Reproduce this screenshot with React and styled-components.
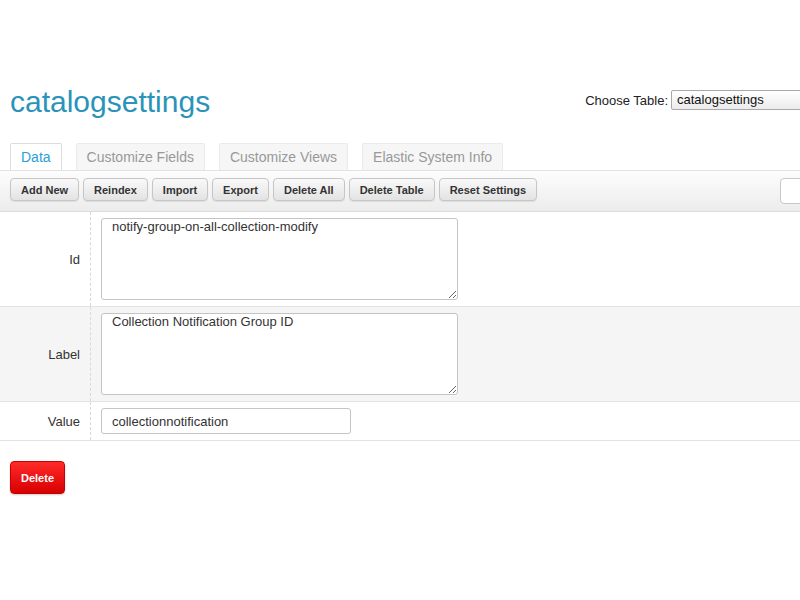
import React from 'react';
import styled, { createGlobalStyle } from 'styled-components';

const GlobalStyle = createGlobalStyle`
  html, body {
    margin: 0;
    padding: 0;
    overflow: hidden;
    background: #fff;
  }
  body {
    font-family: "Liberation Sans", Arial, sans-serif;
    color: #333;
  }
`

const Page = styled.div`
  width: 900px;
  padding-top: 85px;
`

const Header = styled.div`
  display: flex;
  align-items: flex-start;
  padding: 0 10px;
  height: 58px;
`

const Title = styled.h1`
  margin: 0;
  font-size: 30px;
  font-weight: normal;
  line-height: 34px;
  color: #2a93b9;
`

const Chooser = styled.div`
  margin-left: auto;
  display: flex;
  align-items: center;
  gap: 3px;
  padding-top: 5px;
  font-size: 13px;
  color: #222;
`

const Select = styled.div`
  width: 207px;
  height: 18px;
  line-height: 18px;
  padding: 0 5px;
  border: 1px solid #a9a9a9;
  border-radius: 2px;
  background: linear-gradient(#ffffff, #ececec);
  font-size: 13px;
  color: #111;
`

const Tabs = styled.div`
  display: flex;
  gap: 14px;
  padding: 0 10px;
`

const Tab = styled.div`
  height: 26px;
  line-height: 27px;
  padding: 0 10px;
  font-size: 14px;
  border: 1px solid ${p => (p.$active ? '#dcdcdc' : '#eaeaea')};
  border-bottom: none;
  background: ${p => (p.$active ? '#fff' : '#f6f6f6')};
  color: ${p => (p.$active ? '#2a9fd6' : '#999')};
  border-radius: 2px 2px 0 0;
`

const Toolbar = styled.div`
  display: flex;
  align-items: flex-start;
  gap: 4px;
  height: 33px;
  padding: 7px 10px 0;
  background: linear-gradient(#fdfdfd, #ececec);
  border-top: 1px solid #e2e2e2;
  border-bottom: 1px solid #dcdcdc;
`

const ToolButton = styled.button`
  height: 23px;
  padding: 0 10px;
  font-family: inherit;
  font-size: 11px;
  font-weight: bold;
  color: #333;
  border: 1px solid #c6c6c6;
  border-radius: 4px;
  background: linear-gradient(#f9f9f9, #e3e3e3);
  box-shadow: 0 1px 1px rgba(0, 0, 0, 0.08);
`

const Search = styled.input`
  margin-left: auto;
  width: 104px;
  height: 22px;
  border: 1px solid #c8c8c8;
  border-radius: 4px;
  background: #fff;
`

const Row = styled.div`
  display: flex;
  align-items: stretch;
  background: ${p => (p.$alt ? '#f5f5f5' : '#fff')};
  border-bottom: 1px solid #e3e3e3;
`

const Label = styled.div`
  width: 80px;
  padding-right: 10px;
  display: flex;
  align-items: center;
  justify-content: flex-end;
  font-size: 13px;
  color: #333;
  border-right: 1px dashed #d8d8d8;
`

const Field = styled.div`
  padding: 6px 10px 6px 10px;
  display: flex;
  align-items: center;
`

const Area = styled.textarea`
  box-sizing: border-box;
  width: 357px;
  height: 82px;
  padding: 0 10px;
  border: 1px solid #c4c4c4;
  border-radius: 3px;
  background: #fff;
  font-family: "Liberation Sans", Arial, sans-serif;
  font-size: 13px;
  color: #333;
  resize: vertical;
`

const Input = styled.input`
  box-sizing: border-box;
  width: 250px;
  height: 26px;
  padding: 0 10px;
  border: 1px solid #c4c4c4;
  border-radius: 3px;
  background: #fff;
  font-family: "Liberation Sans", Arial, sans-serif;
  font-size: 13px;
  color: #333;
`

const Footer = styled.div`
  padding: 20px 10px;
`

const DeleteButton = styled.button`
  height: 33px;
  padding: 0 10px;
  font-family: inherit;
  font-size: 11px;
  font-weight: bold;
  color: #fff;
  border: 1px solid #c70000;
  border-radius: 4px;
  background: linear-gradient(#ff2a2a, #d70000);
  box-shadow: 0 1px 2px rgba(0, 0, 0, 0.2);
`

const actions = ['Add New', 'Reindex', 'Import', 'Export', 'Delete All', 'Delete Table', 'Reset Settings'];
const tabs = ['Data', 'Customize Fields', 'Customize Views', 'Elastic System Info'];

export default function App() {
  return (
    <Page>
      <GlobalStyle />
      <Header>
        <Title>catalogsettings</Title>
        <Chooser>
          Choose Table:
          <Select>catalogsettings</Select>
        </Chooser>
      </Header>
      <Tabs>
        {tabs.map((t, i) => (
          <Tab key={t} $active={i === 0}>{t}</Tab>
        ))}
      </Tabs>
      <Toolbar>
        {actions.map(a => (
          <ToolButton key={a}>{a}</ToolButton>
        ))}
        <Search />
      </Toolbar>
      <Row>
        <Label>Id</Label>
        <Field>
          <Area defaultValue="notify-group-on-all-collection-modify" />
        </Field>
      </Row>
      <Row $alt>
        <Label>Label</Label>
        <Field>
          <Area defaultValue="Collection Notification Group ID" />
        </Field>
      </Row>
      <Row>
        <Label>Value</Label>
        <Field>
          <Input defaultValue="collectionnotification" />
        </Field>
      </Row>
      <Footer>
        <DeleteButton>Delete</DeleteButton>
      </Footer>
    </Page>
  );
}
